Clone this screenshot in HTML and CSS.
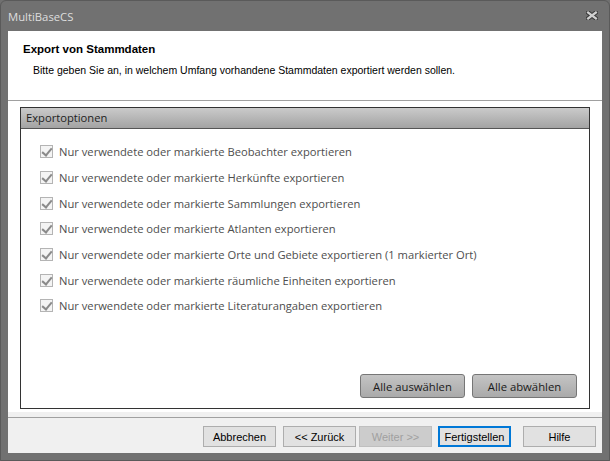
FILE: index.html
```html
<!DOCTYPE html>
<html lang="de">
<head>
    <meta charset="UTF-8">
    <title>MultiBaseCS</title>
    <link rel="stylesheet" href="styles.css">
</head>
<body>
    <div class="window">
        <div class="titlebar">
            <span class="title">MultiBaseCS</span>
            <svg class="close" width="12" height="9" viewBox="0 0 12 9">
                <path d="M2.2 1.6 L9.8 7.4 M9.8 1.6 L2.2 7.4" stroke="#3a3a3a" stroke-width="4.4" stroke-linecap="square"/>
                <path d="M2.2 1.6 L9.8 7.4 M9.8 1.6 L2.2 7.4" stroke="#cfcfcf" stroke-width="2.4" stroke-linecap="square"/>
            </svg>
        </div>

        <div class="head">
            <h1>Export von Stammdaten</h1>
            <p>Bitte geben Sie an, in welchem Umfang vorhandene Stammdaten exportiert werden sollen.</p>
        </div>

        <div class="main">
            <div class="group">
                <div class="group-title">Exportoptionen</div>
                <ul class="options">
                    <li><span class="check"></span>Nur verwendete oder markierte Beobachter exportieren</li>
                    <li><span class="check"></span>Nur verwendete oder markierte Herkünfte exportieren</li>
                    <li><span class="check"></span>Nur verwendete oder markierte Sammlungen exportieren</li>
                    <li><span class="check"></span>Nur verwendete oder markierte Atlanten exportieren</li>
                    <li><span class="check"></span>Nur verwendete oder markierte Orte und Gebiete exportieren (1 markierter Ort)</li>
                    <li><span class="check"></span>Nur verwendete oder markierte räumliche Einheiten exportieren</li>
                    <li><span class="check"></span>Nur verwendete oder markierte Literaturangaben exportieren</li>
                </ul>
                <div class="group-buttons">
                    <button class="btn-dark">Alle auswählen</button>
                    <button class="btn-dark">Alle abwählen</button>
                </div>
            </div>
        </div>

        <div class="footer">
            <button class="btn cancel">Abbrechen</button>
            <button class="btn back">&lt;&lt; Zurück</button>
            <button class="btn disabled">Weiter &gt;&gt;</button>
            <button class="btn default">Fertigstellen</button>
            <button class="btn help">Hilfe</button>
        </div>
    </div>
</body>
</html>
```

FILE: styles.css
```css
* {
    margin: 0;
    padding: 0;
    box-sizing: border-box;
}

body {
    font-family: 'Open Sans', sans-serif;
    background-color: #707070;
}

.window {
    width: 610px;
    height: 461px;
    background-color: #717171;
    border: 1px solid #5a5a5a;
    border-radius: 6px 6px 0 0;
    padding: 0 7px 7px 7px;
    display: flex;
    flex-direction: column;
}

.titlebar {
    height: 30px;
    flex-shrink: 0;
    display: flex;
    align-items: center;
    justify-content: space-between;
    padding-right: 4px;
}

.titlebar .title {
    color: #dedede;
    font-size: 11.3px;
    margin-top: 1px;
}

.close {
    margin-top: -1px;
}

.head {
    background-color: #ffffff;
    height: 70px;
    flex-shrink: 0;
    padding: 12px 15px 0 15px;
    font-family: 'Liberation Sans', Arial, sans-serif;
    color: #000;
    border-bottom: 1px solid #a0a0a0;
}

.head h1 {
    font-size: 11.5px;
    font-weight: bold;
    margin-bottom: 9px;
}

.head p {
    font-size: 10.5px;
    padding-left: 10px;
}

.main {
    background-color: #ffffff;
    height: 316px;
    flex-shrink: 0;
    padding: 6px 12px 3px 12px;
    border-bottom: 5px solid #f0f0f0;
}

.group {
    height: 100%;
    border: 1px solid #333333;
    display: flex;
    flex-direction: column;
}

.group-title {
    height: 21px;
    background: linear-gradient(#cacaca, #a3a3a3);
    border-bottom: 1px solid #555555;
    color: #1e1e1e;
    font-size: 11.2px;
    padding-left: 5px;
    line-height: 20px;
}

.options {
    list-style: none;
    padding: 10px 0 0 19px;
    flex: 1;
}

.options li {
    height: 25.7px;
    display: flex;
    align-items: center;
    font-size: 11.2px;
    color: #4e4e4e;
}

.check {
    width: 13px;
    height: 13px;
    border: 1px solid #b4b4b4;
    background-color: #f4f4f4;
    margin-right: 6px;
    position: relative;
}

.check::after {
    content: "";
    position: absolute;
    left: 3px;
    top: 0px;
    width: 4px;
    height: 8px;
    border-right: 2px solid #8a8a8a;
    border-bottom: 2px solid #8a8a8a;
    transform: rotate(40deg);
}

.group-buttons {
    display: flex;
    justify-content: flex-end;
    gap: 7px;
    padding: 0 12px 10px 0;
}

.btn-dark {
    width: 105px;
    height: 24px;
    font-family: 'Open Sans', sans-serif;
    font-size: 11.3px;
    color: #1a1a1a;
    background: linear-gradient(#c4c4c4, #aaaaaa);
    border: 1px solid #767676;
    border-radius: 3px;
}

.footer {
    flex: 1;
    background-color: #f0f0f0;
    border-top: 1px solid #a0a0a0;
    display: flex;
    align-items: flex-start;
    padding: 8px 0 0 195px;
}

.btn {
    width: 73px;
    height: 21px;
    font-family: 'Liberation Sans', Arial, sans-serif;
    font-size: 11px;
    color: #000;
    background-color: #e1e1e1;
    border: 1px solid #adadad;
}

.btn.back {
    margin-left: 7px;
}

.btn.disabled {
    margin-left: 3px;
    background-color: #cccccc;
    border-color: #bfbfbf;
    color: #a0a0a0;
}

.btn.default {
    border: 2px solid #0078d7;
    margin-left: 6px;
}

.btn.help {
    margin-left: 12px;
}
```
